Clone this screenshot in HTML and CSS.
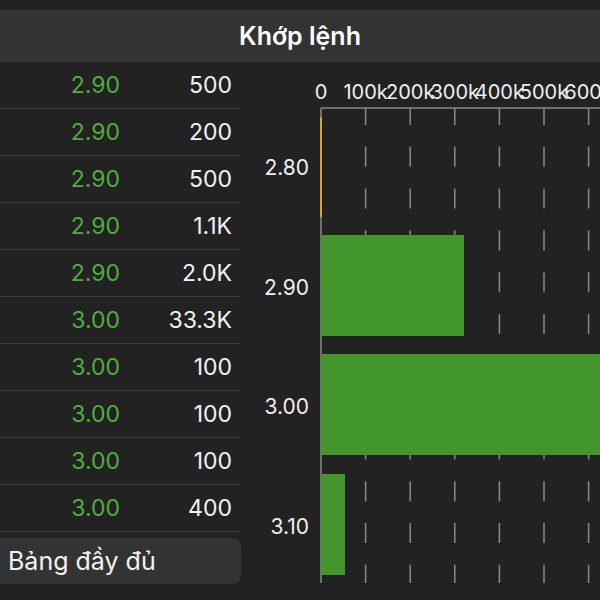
FILE: index.html
```html
<!DOCTYPE html>
<html lang="vi">
<head>
    <meta charset="UTF-8">
    <meta name="viewport" content="width=device-width, initial-scale=1.0">
    <title>Khớp lệnh</title>
    <link rel="stylesheet" href="styles.css">
</head>
<body>
    <div class="header">Khớp lệnh</div>
    <div class="content">
        <div class="trades">
            <div class="row"><span class="price">2.90</span><span class="volume">500</span></div>
            <div class="row"><span class="price">2.90</span><span class="volume">200</span></div>
            <div class="row"><span class="price">2.90</span><span class="volume">500</span></div>
            <div class="row"><span class="price">2.90</span><span class="volume">1.1K</span></div>
            <div class="row"><span class="price">2.90</span><span class="volume">2.0K</span></div>
            <div class="row"><span class="price">3.00</span><span class="volume">33.3K</span></div>
            <div class="row"><span class="price">3.00</span><span class="volume">100</span></div>
            <div class="row"><span class="price">3.00</span><span class="volume">100</span></div>
            <div class="row"><span class="price">3.00</span><span class="volume">100</span></div>
            <div class="row"><span class="price">3.00</span><span class="volume">400</span></div>
            <button class="full-table">Bảng đầy đủ</button>
        </div>

        <svg class="chart" width="359" height="538" viewBox="241 62 359 538">
            <g class="x-labels">
                <text x="321" y="99">0</text>
                <text x="365.6" y="99">100k</text>
                <text x="410.2" y="99">200k</text>
                <text x="454.8" y="99">300k</text>
                <text x="499.4" y="99">400k</text>
                <text x="544" y="99">500k</text>
                <text x="588.6" y="99">600k</text>
            </g>

            <g class="grid">
                <line x1="365.6" y1="108" x2="365.6" y2="583"/>
                <line x1="410.2" y1="108" x2="410.2" y2="583"/>
                <line x1="454.8" y1="108" x2="454.8" y2="583"/>
                <line x1="499.4" y1="108" x2="499.4" y2="583"/>
                <line x1="544" y1="108" x2="544" y2="583"/>
                <line x1="588.6" y1="108" x2="588.6" y2="583"/>
            </g>

            <line class="axis" x1="321" y1="108" x2="600" y2="108"/>
            <line class="axis" x1="321" y1="108" x2="321" y2="583"/>

            <rect class="bar-ref" x="320" y="117" width="2" height="100"/>
            <rect class="bar" x="321" y="235" width="143" height="101"/>
            <rect class="bar" x="321" y="354" width="290" height="101"/>
            <rect class="bar" x="321" y="474" width="24" height="101"/>

            <g class="y-labels">
                <text x="309" y="174.5">2.80</text>
                <text x="309" y="295">2.90</text>
                <text x="309" y="414">3.00</text>
                <text x="309" y="533.5">3.10</text>
            </g>
        </svg>
    </div>
</body>
</html>
```

FILE: styles.css
```css
body {
    margin: 0;
    padding: 0;
    width: 600px;
    height: 600px;
    overflow: hidden;
    background: #222222;
    color: #f2f2f2;
    font-family: 'Inter', 'Liberation Sans', sans-serif;
}

.header {
    margin-top: 10px;
    height: 52px;
    background: #333333;
    display: flex;
    justify-content: center;
    align-items: center;
    font-size: 25px;
    font-weight: 600;
    color: #ffffff;
}

.content {
    display: flex;
}

.trades {
    width: 241px;
    flex: none;
}

.row {
    height: 46px;
    border-bottom: 1px solid #3a3a3a;
    display: flex;
    align-items: center;
    font-size: 23px;
}

.price {
    width: 120px;
    text-align: right;
    color: #4fae3c;
}

.volume {
    width: 112px;
    text-align: right;
    color: #f2f2f2;
}

.full-table {
    display: block;
    width: 249px;
    height: 46px;
    margin: 6px 0 0 -8px;
    padding: 0 0 0 16px;
    border: none;
    border-radius: 8px;
    background: #333333;
    color: #f2f2f2;
    font-family: inherit;
    font-size: 25px;
    text-align: left;
}

.chart {
    flex: none;
    display: block;
}

.chart text {
    font-family: 'Inter', 'Liberation Sans', sans-serif;
    fill: #f0f0f0;
}

.x-labels text {
    font-size: 20px;
    text-anchor: middle;
}

.y-labels text {
    font-size: 21px;
    text-anchor: end;
}

.grid line {
    stroke: #8a8a8a;
    stroke-width: 1.5;
    stroke-dasharray: 20 21.8;
    stroke-dashoffset: 3;
}

.axis {
    stroke: #8a8a8a;
    stroke-width: 1.5;
}

.bar {
    fill: #43962c;
}

.bar-ref {
    fill: #d9a520;
}
```
